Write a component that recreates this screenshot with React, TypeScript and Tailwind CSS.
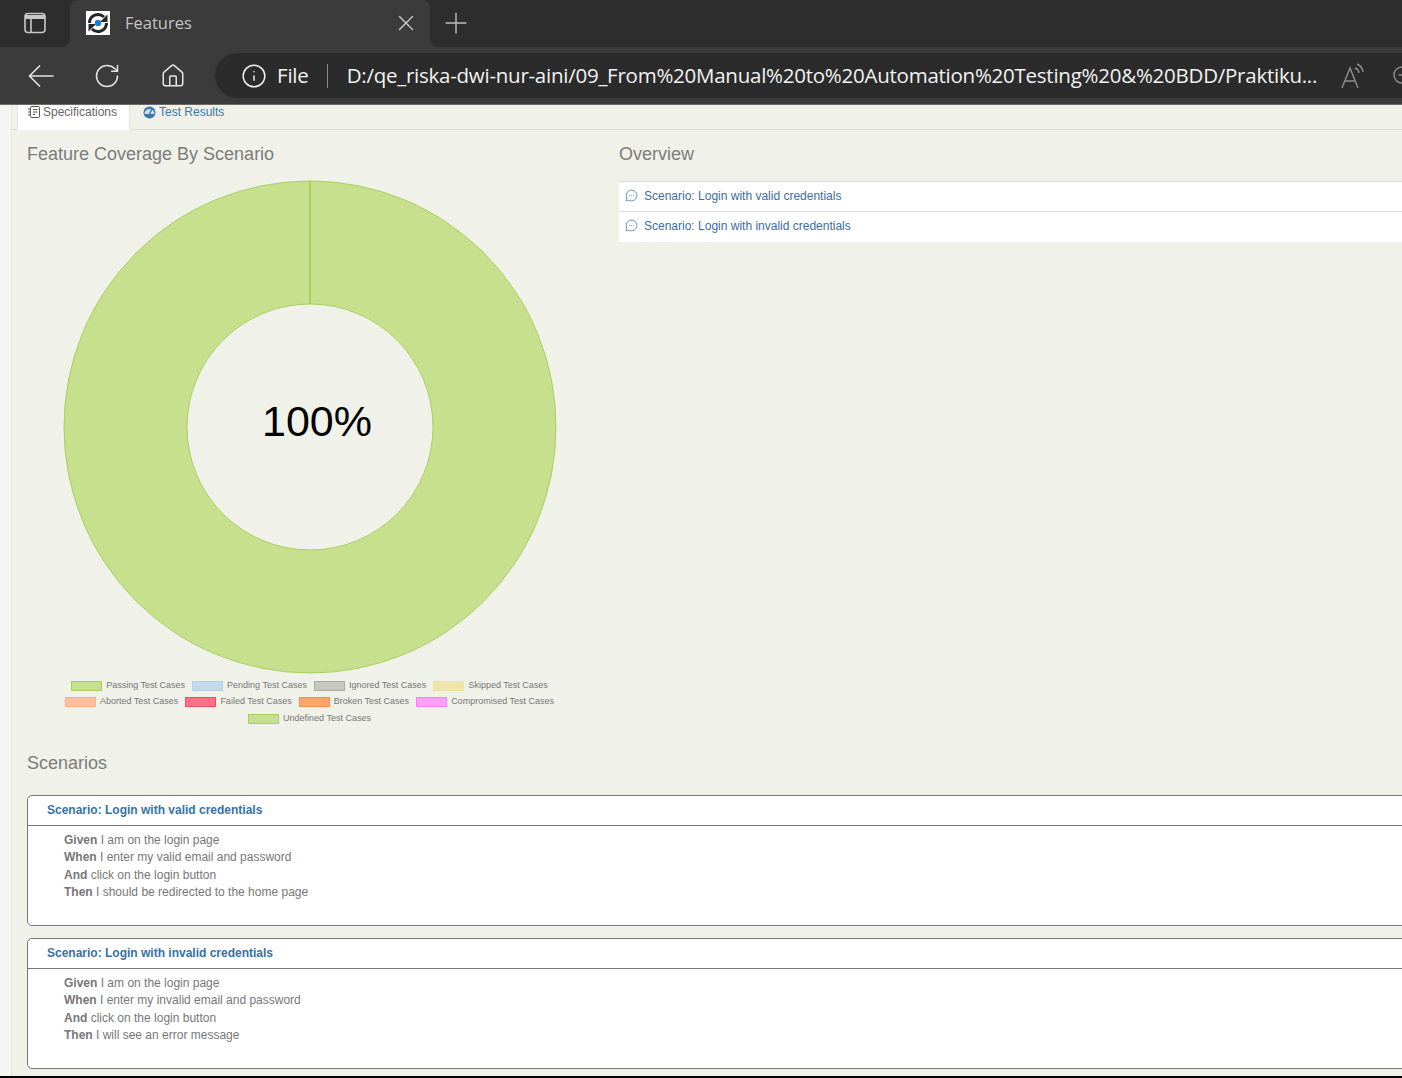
import { Home, Info, MessageCircleMore, Plus, RotateCw, X, ZoomOut } from "lucide-react";

const legendRows = [
  [
    { label: "Passing Test Cases", fill: "bg-[#c6e08e]", line: "border-[#a8d060]" },
    { label: "Pending Test Cases", fill: "bg-[#c5d9ec]", line: "border-[#b5cfe8]" },
    { label: "Ignored Test Cases", fill: "bg-[#c8c8c3]", line: "border-[#aaaaa6]" },
    { label: "Skipped Test Cases", fill: "bg-[#efe4ac]", line: "border-[#eee2a5]" },
  ],
  [
    { label: "Aborted Test Cases", fill: "bg-[#fbc0a0]", line: "border-[#f8b28c]" },
    { label: "Failed Test Cases", fill: "bg-[#fb7186]", line: "border-[#e8506a]" },
    { label: "Broken Test Cases", fill: "bg-[#fca56f]", line: "border-[#f58f50]" },
    { label: "Compromised Test Cases", fill: "bg-[#fca0f5]", line: "border-[#fb80f0]" },
  ],
  [{ label: "Undefined Test Cases", fill: "bg-[#c6e08e]", line: "border-[#a8d060]" }],
];

const scenarios = [
  {
    title: "Scenario: Login with valid credentials",
    steps: [
      ["Given", "I am on the login page"],
      ["When", "I enter my valid email and password"],
      ["And", "click on the login button"],
      ["Then", "I should be redirected to the home page"],
    ],
  },
  {
    title: "Scenario: Login with invalid credentials",
    steps: [
      ["Given", "I am on the login page"],
      ["When", "I enter my invalid email and password"],
      ["And", "click on the login button"],
      ["Then", "I will see an error message"],
    ],
  },
];

function Favicon() {
  return (
    <svg width="24" height="24" viewBox="0 0 24 24" className="shrink-0">
      <rect width="24" height="24" fill="#ffffff" />
      <path d="M3.5 12 A8.5 8.5 0 0 1 18 6" fill="none" stroke="#262626" strokeWidth="3" />
      <path d="M20.5 12 A8.5 8.5 0 0 1 6 18" fill="none" stroke="#262626" strokeWidth="3" />
      <path d="M21.5 3.5 V11 H14 Z" fill="#262626" />
      <path d="M2.5 20.5 V13 H10 Z" fill="#262626" />
      <circle cx="12" cy="12" r="3.2" fill="#1a7fd8" />
    </svg>
  );
}

function BrowserChrome() {
  return (
    <div className="shrink-0 font-['Open_Sans',sans-serif]">
      <div className="flex h-[47px] bg-[#3b3b3b]">
        <div className="flex w-[70px] items-center rounded-br-lg bg-[#2d2d2d] pb-[2px] pl-6">
          <svg width="22" height="22" viewBox="0 0 22 22" fill="none" stroke="#c8c8c8" strokeWidth="1.6">
            <rect x="1" y="1.5" width="20" height="19" rx="3" />
            <path d="M1 5h20" strokeWidth="4" />
            <path d="M7 7v13" />
          </svg>
        </div>
        <div className="w-[360px] bg-[#2d2d2d]">
          <div className="flex h-full items-center rounded-t-lg bg-[#3b3b3b] pb-[1px] pl-4 pr-[11px]">
            <Favicon />
            <span className="ml-[15px] flex-1 text-[16.5px] text-[#c4c4c4]">Features</span>
            <X size={26} strokeWidth={1.2} className="text-[#cfcfcf]" />
          </div>
        </div>
        <div className="flex flex-1 items-center rounded-bl-lg bg-[#2d2d2d] pb-[2px] pl-[9px]">
          <Plus size={34} strokeWidth={1} className="text-[#bdbdbd]" />
        </div>
      </div>
      <div className="flex h-[58px] items-center border-b border-[#6b6b6b] bg-[#3b3b3b]">
        <div className="flex w-[215px] shrink-0 items-center pl-[28px] text-[#e4e4e4]">
          <svg width="26" height="24" viewBox="0 0 26 24" fill="none" stroke="currentColor" strokeWidth="1.6">
            <path d="M1.5 12 H25.5 M12 1.5 L1.5 12 L12 22.5" />
          </svg>
          <RotateCw size={28} strokeWidth={1.3} className="ml-[39px]" />
          <Home size={26} strokeWidth={1.4} className="ml-[39px]" />
        </div>
        <div className="flex h-[45px] min-w-0 flex-1 items-center overflow-hidden rounded-l-full bg-[#2b2b2b] pl-[26px]">
          <Info size={26} strokeWidth={1.4} className="shrink-0 text-[#ececec]" />
          <span className="ml-[10px] text-[20.5px] tracking-[-0.2px] text-[#f2f2f2]">File</span>
          <span className="ml-[18px] h-[24px] w-px shrink-0 bg-[#8a8a8a]" />
          <span className="ml-[19px] w-[975px] shrink-0 whitespace-nowrap text-[20.5px] tracking-[-0.25px] text-[#f2f2f2]">
            D:/qe_riska-dwi-nur-aini/09_From%20Manual%20to%20Automation%20Testing%20&amp;%20BDD/Praktiku...
          </span>
          <svg width="26" height="26" viewBox="0 0 26 26" fill="none" stroke="#8f8f8f" strokeWidth="1.4" className="ml-[18px] shrink-0">
            <path d="M2 25 L10 5 L18 25 M5 18 H15" />
            <path d="M15 5 a6 6 0 0 1 4 5 M17 1 a10 10 0 0 1 6 8" />
          </svg>
          <ZoomOut size={24} strokeWidth={1.4} className="ml-[25px] shrink-0 text-[#8f8f8f]" />
        </div>
      </div>
    </div>
  );
}

function SpecIcon() {
  return (
    <svg width="12" height="12" viewBox="0 0 12 12" fill="none" stroke="#555555" strokeWidth="1" className="mt-[1px] shrink-0">
      <rect x="2.5" y="0.5" width="9" height="11" rx="1" />
      <path d="M0 3h2M0 6h2M0 9h2M5 3.5h4.5M5 6h4.5M5 8.5h2" />
    </svg>
  );
}

function GaugeIcon() {
  return (
    <svg width="13" height="13" viewBox="0 0 13 13" className="mt-[1px] shrink-0">
      <circle cx="6.5" cy="6.5" r="6" fill="#3a79ad" />
      <path d="M1.5 8 A5 5 0 0 1 11.5 8 Z" fill="#cfe0ee" />
      <path d="M6.5 8 L9 3" stroke="#3a79ad" strokeWidth="1.4" />
    </svg>
  );
}

function Donut() {
  return (
    <div className="relative ml-[36px] h-[494px] w-[494px]">
      <svg width="494" height="494" viewBox="0 0 494 494">
        <circle cx="247" cy="247" r="184.5" fill="none" stroke="#c6e08e" strokeWidth="123" />
        <circle cx="247" cy="247" r="246" fill="none" stroke="#a8d060" strokeWidth="1" />
        <circle cx="247" cy="247" r="123" fill="#f0f1e9" />
        <circle cx="247" cy="247" r="123" fill="none" stroke="#a8d060" strokeWidth="1" />
        <path d="M247 1 V124" stroke="#a8d060" strokeWidth="2" />
      </svg>
      <span className="absolute left-[199px] top-[216px] text-[43px] leading-[50px] text-black">100%</span>
    </div>
  );
}

function Legend() {
  return (
    <div className="mt-[3.3px] flex w-[565px] flex-col text-[9px] text-[#777777]">
      {legendRows.map((row, i) => (
        <div key={i} className="flex h-[16.5px] items-center justify-center gap-[7px]">
          {row.map((item) => (
            <div key={item.label} className="flex items-center gap-[4px]">
              <span className={`h-[10px] w-[31px] border ${item.fill} ${item.line}`} />
              <span className="whitespace-nowrap">{item.label}</span>
            </div>
          ))}
        </div>
      ))}
    </div>
  );
}

export default function App() {
  return (
    <div className="flex h-[1078px] w-[1402px] flex-col overflow-hidden bg-[#f0f1e9] font-['Liberation_Sans',sans-serif]">
      <BrowserChrome />
      <div className="flex min-h-0 flex-1">
        <div className="w-[12px] shrink-0 border-r border-[#e4e5dd] bg-[#f5f6f1]" />
        <div className="min-w-0 flex-1 overflow-hidden">
          <div className="flex h-[25px] items-stretch border-b border-[#dddddd] pl-[5px]">
            <div className="-mb-px flex w-[113px] items-start gap-[3px] border-x border-[#e4e4e4] bg-white pl-[10px] text-[12px] leading-[15px] text-[#666666]">
              <SpecIcon />
              Specifications
            </div>
            <div className="flex items-start gap-[3px] pl-[13px] text-[12px] leading-[15px] text-[#3a79ad]">
              <GaugeIcon />
              Test Results
            </div>
          </div>

          <div className="flex">
            <div className="w-[607px] shrink-0 pl-[15px]">
              <h2 className="mt-[14px] text-[18px] leading-[20px] text-[#7c7c7c]">Feature Coverage By Scenario</h2>
              <div className="mt-[16px]"><Donut /></div>
              <Legend />
            </div>
            <div className="flex-1">
              <h2 className="mt-[14px] text-[18px] leading-[20px] text-[#7c7c7c]">Overview</h2>
              <div className="mt-[17px] bg-white pb-px text-[12px] text-[#3a6ea5]">
                {scenarios.map((s) => (
                  <div key={s.title} className="flex h-[30px] items-center gap-[6px] border-t border-[#dddddd] pb-[2px] pl-[6px]">
                    <MessageCircleMore size={13} strokeWidth={1.6} className="shrink-0 text-[#5b86ad]" />
                    {s.title}
                  </div>
                ))}
              </div>
            </div>
          </div>

          <div className="pl-[15px]">
            <h2 className="mt-[26px] text-[18px] leading-[20px] text-[#7c7c7c]">Scenarios</h2>
            <div className="mt-[22px] flex w-[1500px] flex-col gap-[12px]">
              {scenarios.map((s) => (
                <div key={s.title} className="h-[131px] rounded-[5px] border border-[#777777] bg-white">
                  <div className="flex h-[30px] items-center border-b border-[#777777] pl-[19px] text-[12px] font-bold text-[#3572a8]">
                    {s.title}
                  </div>
                  <div className="pl-[36px] pt-[6px] text-[12px] leading-[17.5px] text-[#777777]">
                    {s.steps.map(([keyword, text]) => (
                      <div key={keyword}>
                        <b>{keyword}</b> {text}
                      </div>
                    ))}
                  </div>
                </div>
              ))}
            </div>
          </div>
        </div>
      </div>
      <div className="h-[2px] shrink-0 bg-black" />
    </div>
  );
}
